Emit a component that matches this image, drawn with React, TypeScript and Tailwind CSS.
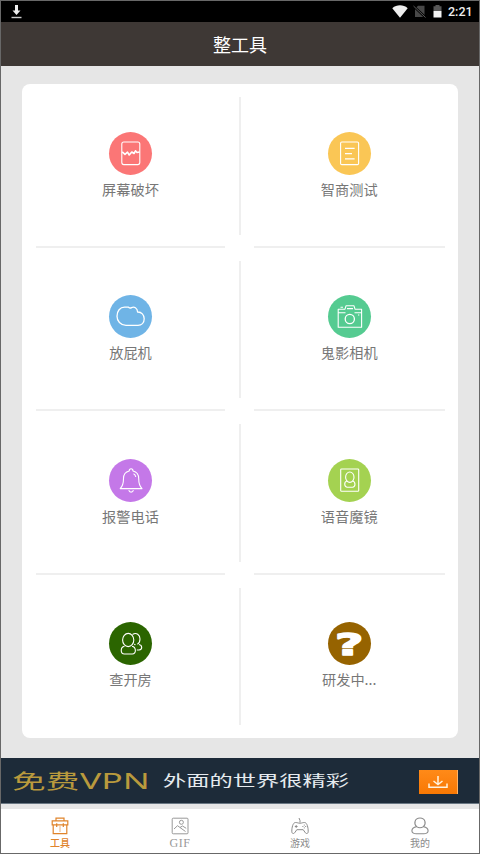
import type { ReactNode } from 'react';

const sans = "font-['Noto_Sans_CJK_SC',sans-serif]";

type Tool = { label: string; color: string; icon: ReactNode };

const tools: Tool[] = [
  {
    label: '屏幕破坏',
    color: 'bg-[#fb7676]',
    icon: (
      <>
        <rect x="12.8" y="10" width="18" height="22.6" rx="2" />
        <path d="M13.2 19.8L16 22.4L18.5 20.2L20.2 23L22.8 20L25 21.5L26.5 18.8L28 20.5L30.6 20" strokeWidth="1.6" />
      </>
    ),
  },
  {
    label: '智商测试',
    color: 'bg-[#fac655]',
    icon: (
      <>
        <rect x="12.6" y="10" width="18" height="22.6" rx="1.2" />
        <path d="M17 16.3H26.6M17 21.6H24M17 26.8H26.6" strokeWidth="1.3" />
      </>
    ),
  },
  {
    label: '放屁机',
    color: 'bg-[#6fb4e6]',
    icon: (
      <path
        d="M15.5 12.2H19.5Q21 13.6 22.5 12.6C25 11.4 28.4 12.6 28.6 17C32.5 16.8 35.2 20 35.2 23.8C35.2 27.8 32.5 30.3 29 30.3H17C11.5 30.3 8 26 8 21.2C8 16 11 12.2 15.5 12.2Z"
        strokeWidth="1.3"
      />
    ),
  },
  {
    label: '鬼影相机',
    color: 'bg-[#55cb91]',
    icon: (
      <>
        <path d="M10.2 14.2H17L18 10.8H26L27 14.2H33.6V32.2H10.2ZM10.2 17.8H17.5M26.5 17.8H33.6M12.5 12.3H15M19 13.6H25" />
        <circle cx="21.8" cy="24" r="4.6" strokeWidth="1.3" />
        <path d="M30 20H31.3" />
      </>
    ),
  },
  {
    label: '报警电话',
    color: 'bg-[#c478e8]',
    icon: (
      <>
        <path d="M20.2 12C20.2 8.9 24 8.9 24 12C28.2 13 29.7 16 29.7 19.5C29.7 24.5 30.3 27 33 29.6H11.2C13.9 27 14.5 24.5 14.5 19.5C14.5 16 16 13 20.2 12Z" />
        <path d="M19.8 31.2C20.3 33.8 23.9 33.8 24.4 31.2M24.5 14.7Q26.3 15.4 26.8 18" />
      </>
    ),
  },
  {
    label: '语音魔镜',
    color: 'bg-[#a4d251]',
    icon: (
      <>
        <rect x="12.7" y="10" width="18" height="22.2" rx=".8" />
        <ellipse cx="21.8" cy="18.2" rx="4.2" ry="5.2" />
        <path d="M18.8 22C15.6 23.2 16.4 28.2 19.2 28.2H24.6C27.4 28.2 28 23.2 24.8 22" />
      </>
    ),
  },
  {
    label: '查开房',
    color: 'bg-[#2b6500]',
    icon: (
      <>
        <ellipse cx="19.2" cy="18" rx="5.6" ry="6.6" />
        <path d="M15.5 24.2C11 25.2 11.3 32 15.4 32H23.3C27.5 32 27.4 25.2 23 24.2M23.5 12.5C27.5 9.8 31 13 31 17C31 19.2 30 21.3 28.4 22.3M30 22.5C33.2 23 34 27.6 30 28H27.8M25.2 22.4L26.5 22.8" />
      </>
    ),
  },
  {
    label: '研发中...',
    color: 'bg-[#966300]',
    icon: (
      <text
        transform="translate(21.3 33.2) scale(1.58 1)"
        textAnchor="middle"
        fill="white"
        stroke="white"
        strokeWidth="1.5"
        className="font-['DejaVu_Sans',sans-serif] text-[31px] font-bold"
      >
        ?
      </text>
    ),
  },
];

function ToolCell({ tool, last, left }: { tool: Tool; last: boolean; left: boolean }) {
  return (
    <div className={`flex flex-col ${left ? 'pl-[14px] pr-[14px]' : 'pl-[13px] pr-[13px]'}`}>
      <div className="flex flex-1 flex-col items-center pt-[47.5px]">
        <div className={`size-[43px] rounded-full ${tool.color}`}>
          <svg viewBox="0 0 43 43" className="size-[43px]" fill="none" stroke="white" strokeWidth="1.1" strokeLinejoin="round">
            {tool.icon}
          </svg>
        </div>
        <span className="mt-[4px] text-[14.2px] leading-[21px] whitespace-nowrap text-[#777]">{tool.label}</span>
      </div>
      <div className={`h-[2px] ${last ? '' : 'bg-[#efefef]'}`} />
    </div>
  );
}

function ToolRow({ row }: { row: number }) {
  return (
    <div className="grid grid-cols-[217px_2px_1fr]">
      <ToolCell tool={tools[row * 2]} last={row === 3} left />
      <div className="my-[13px] bg-[#efefef]" />
      <ToolCell tool={tools[row * 2 + 1]} last={row === 3} left={false} />
    </div>
  );
}

function StatusBar() {
  return (
    <div className="flex h-[21px] shrink-0 items-center bg-black pr-[6px] pl-[10px]">
      <svg width="11" height="15" viewBox="0 0 11 15" className="-mt-px">
        <path d="M4 1H7V6.5H9.5L5.5 11L1.5 6.5H4Z" fill="#eee" />
        <path d="M.5 13.5H10.5" stroke="#ccc" strokeWidth="1.4" />
      </svg>
      <div className="ml-auto flex items-center">
        <svg width="16" height="13" viewBox="0 0 16 13">
          <path d="M.3 3.2C4.8-.6 11.2-.6 15.7 3.2L8 12.7Z" fill="#eee" />
        </svg>
        <svg width="13" height="13" viewBox="0 0 13 13" className="ml-[5px]">
          <path d="M5 .8H11.5V12H2V3.8Z" fill="#484848" />
          <path d="M.5 1L12.5 12.5" stroke="#000" strokeWidth="2.4" />
          <path d="M.5 1L12.5 12.5" stroke="#5a5a5a" strokeWidth="1" />
        </svg>
        <svg width="9" height="13" viewBox="0 0 9 13" className="ml-[7px]">
          <path d="M2.5 0H6.5V1.2H8.5V6H.5V1.2H2.5Z" fill="#585858" />
          <path d="M.5 6H8.5V12.5H.5Z" fill="#f4f4f4" />
        </svg>
        <span className="ml-[6px] w-[25px] font-['Roboto',sans-serif] text-[12.5px] leading-[20px] font-medium text-[#eee]">2:21</span>
      </div>
    </div>
  );
}

function Banner() {
  return (
    <div className="flex h-[46px] shrink-0 items-center border-b border-[#697783] bg-[#1d2b39] pl-[11px]">
      <div className="w-[68px] shrink-0">
        <span className="mb-[2px] inline-block origin-left scale-x-[1.62] text-[20.8px] leading-[42px] whitespace-nowrap text-[#b99a3d]">免费</span>
      </div>
      <div className="w-[83px] shrink-0">
        <span className="mb-[1px] inline-block origin-left scale-x-[1.63] font-['Noto_Sans',sans-serif] text-[21.8px] leading-[43px] whitespace-nowrap text-[#b99a3d]">VPN</span>
      </div>
      <div className="w-[256px] shrink-0">
        <span className="mb-[3px] inline-block origin-left scale-x-[1.55] text-[15px] leading-[41px] whitespace-nowrap text-[#e6ebef]">外面的世界很精彩</span>
      </div>
      <div className="mt-[2px] flex h-[24px] w-[39px] items-center justify-center border-r border-[#ffb366] bg-linear-to-b from-[#ff8a18] to-[#f87803]">
        <svg width="20" height="14" viewBox="0 0 20 14" fill="none" stroke="#fff2dd" strokeWidth="1.5">
          <path d="M10 1V9M5.5 6L10 9.5L14.5 6M1 8.5V12.2H19V8.5" />
        </svg>
      </div>
    </div>
  );
}

const tabs: { label: string; color: string; font: string; icon: ReactNode }[] = [
  {
    label: '工具',
    color: 'text-[#e0842b]',
    font: 'text-[10px] font-medium',
    icon: (
      <>
        <path d="M5 3.8V1.2H13V3.8M1.2 3.8H16.8V7.8H1.2ZM2.2 7.8V16.6H15.8V7.8M5.7 6.3V10M12.3 6.3V10" strokeWidth="1.2" />
        <path d="M9 9V15" strokeWidth=".6" />
      </>
    ),
  },
  {
    label: 'GIF',
    color: 'text-[#999]',
    font: "font-['Liberation_Serif',serif] tracking-[.5px] text-[12px]",
    icon: (
      <>
        <rect x="1.2" y="1.2" width="15.8" height="15.6" rx="1" />
        <circle cx="10.4" cy="5.3" r="2" />
        <path d="M3 12L6.5 8.7L14.5 14.5M9 10.5L11.5 9L15.2 11.3" />
      </>
    ),
  },
  {
    label: '游戏',
    color: 'text-[#8b8b8b]',
    font: 'text-[10px]',
    icon: (
      <>
        <path d="M9 5.5V3.5L8 1M4.5 5.5C6.5 5.5 7 6.2 9 6.2C11 6.2 11.5 5.5 13.5 5.5C16.2 5.5 17.2 11 17.2 14.2C17.2 17 15.2 17.2 14 15.3L12.2 12.7H5.8L4 15.3C2.8 17.2.8 17 .8 14.2C.8 11 1.8 5.5 4.5 5.5Z" />
        <path d="M3.8 9.5H6.6M5.2 8.1V10.9M11.4 9.5H12.4M14.2 9.5H15.2M13.3 7.6V8.6M13.3 10.4V11.4" />
      </>
    ),
  },
  {
    label: '我的',
    color: 'text-[#8b8b8b]',
    font: 'text-[10px]',
    icon: (
      <path
        d="M5.6 9.6C-.6 10.8-.6 16.8 5.3 16.8H12.7C18.6 16.8 18.6 10.8 12.4 9.6C15.5 6.8 14.4 1 9 1C3.6 1 2.5 6.8 5.6 9.6ZM5.6 9.6Q9 12 12.4 9.6"
        strokeWidth="1.1"
      />
    ),
  },
];

export default function App() {
  return (
    <div className={`flex h-[854px] w-[480px] flex-col overflow-hidden border border-[#686868] bg-[#e6e6e6] ${sans}`}>
      <StatusBar />
      <header className="flex h-[44px] shrink-0 items-center justify-center bg-[#3e3835] text-[18px] leading-[44px] text-white">整工具</header>
      <main className="h-[692px] shrink-0 pt-[18px] pr-[21.5px] pl-[21px]">
        <div className="grid h-[654px] grid-rows-4 rounded-[8px] bg-white">
          {[0, 1, 2, 3].map((r) => (
            <ToolRow key={r} row={r} />
          ))}
        </div>
      </main>
      <Banner />
      <nav className="mt-[5px] -mx-px grid flex-1 grid-cols-4 bg-white">
        {tabs.map((t) => (
          <div key={t.label} className={`flex flex-col items-center pt-[8px] ${t.color}`}>
            <svg width="18" height="18" viewBox="0 0 18 18" className="shrink-0" fill="none" stroke="currentColor" strokeWidth="1">
              {t.icon}
            </svg>
            <span className={`leading-[16px] ${t.font}`}>{t.label}</span>
          </div>
        ))}
      </nav>
    </div>
  );
}
